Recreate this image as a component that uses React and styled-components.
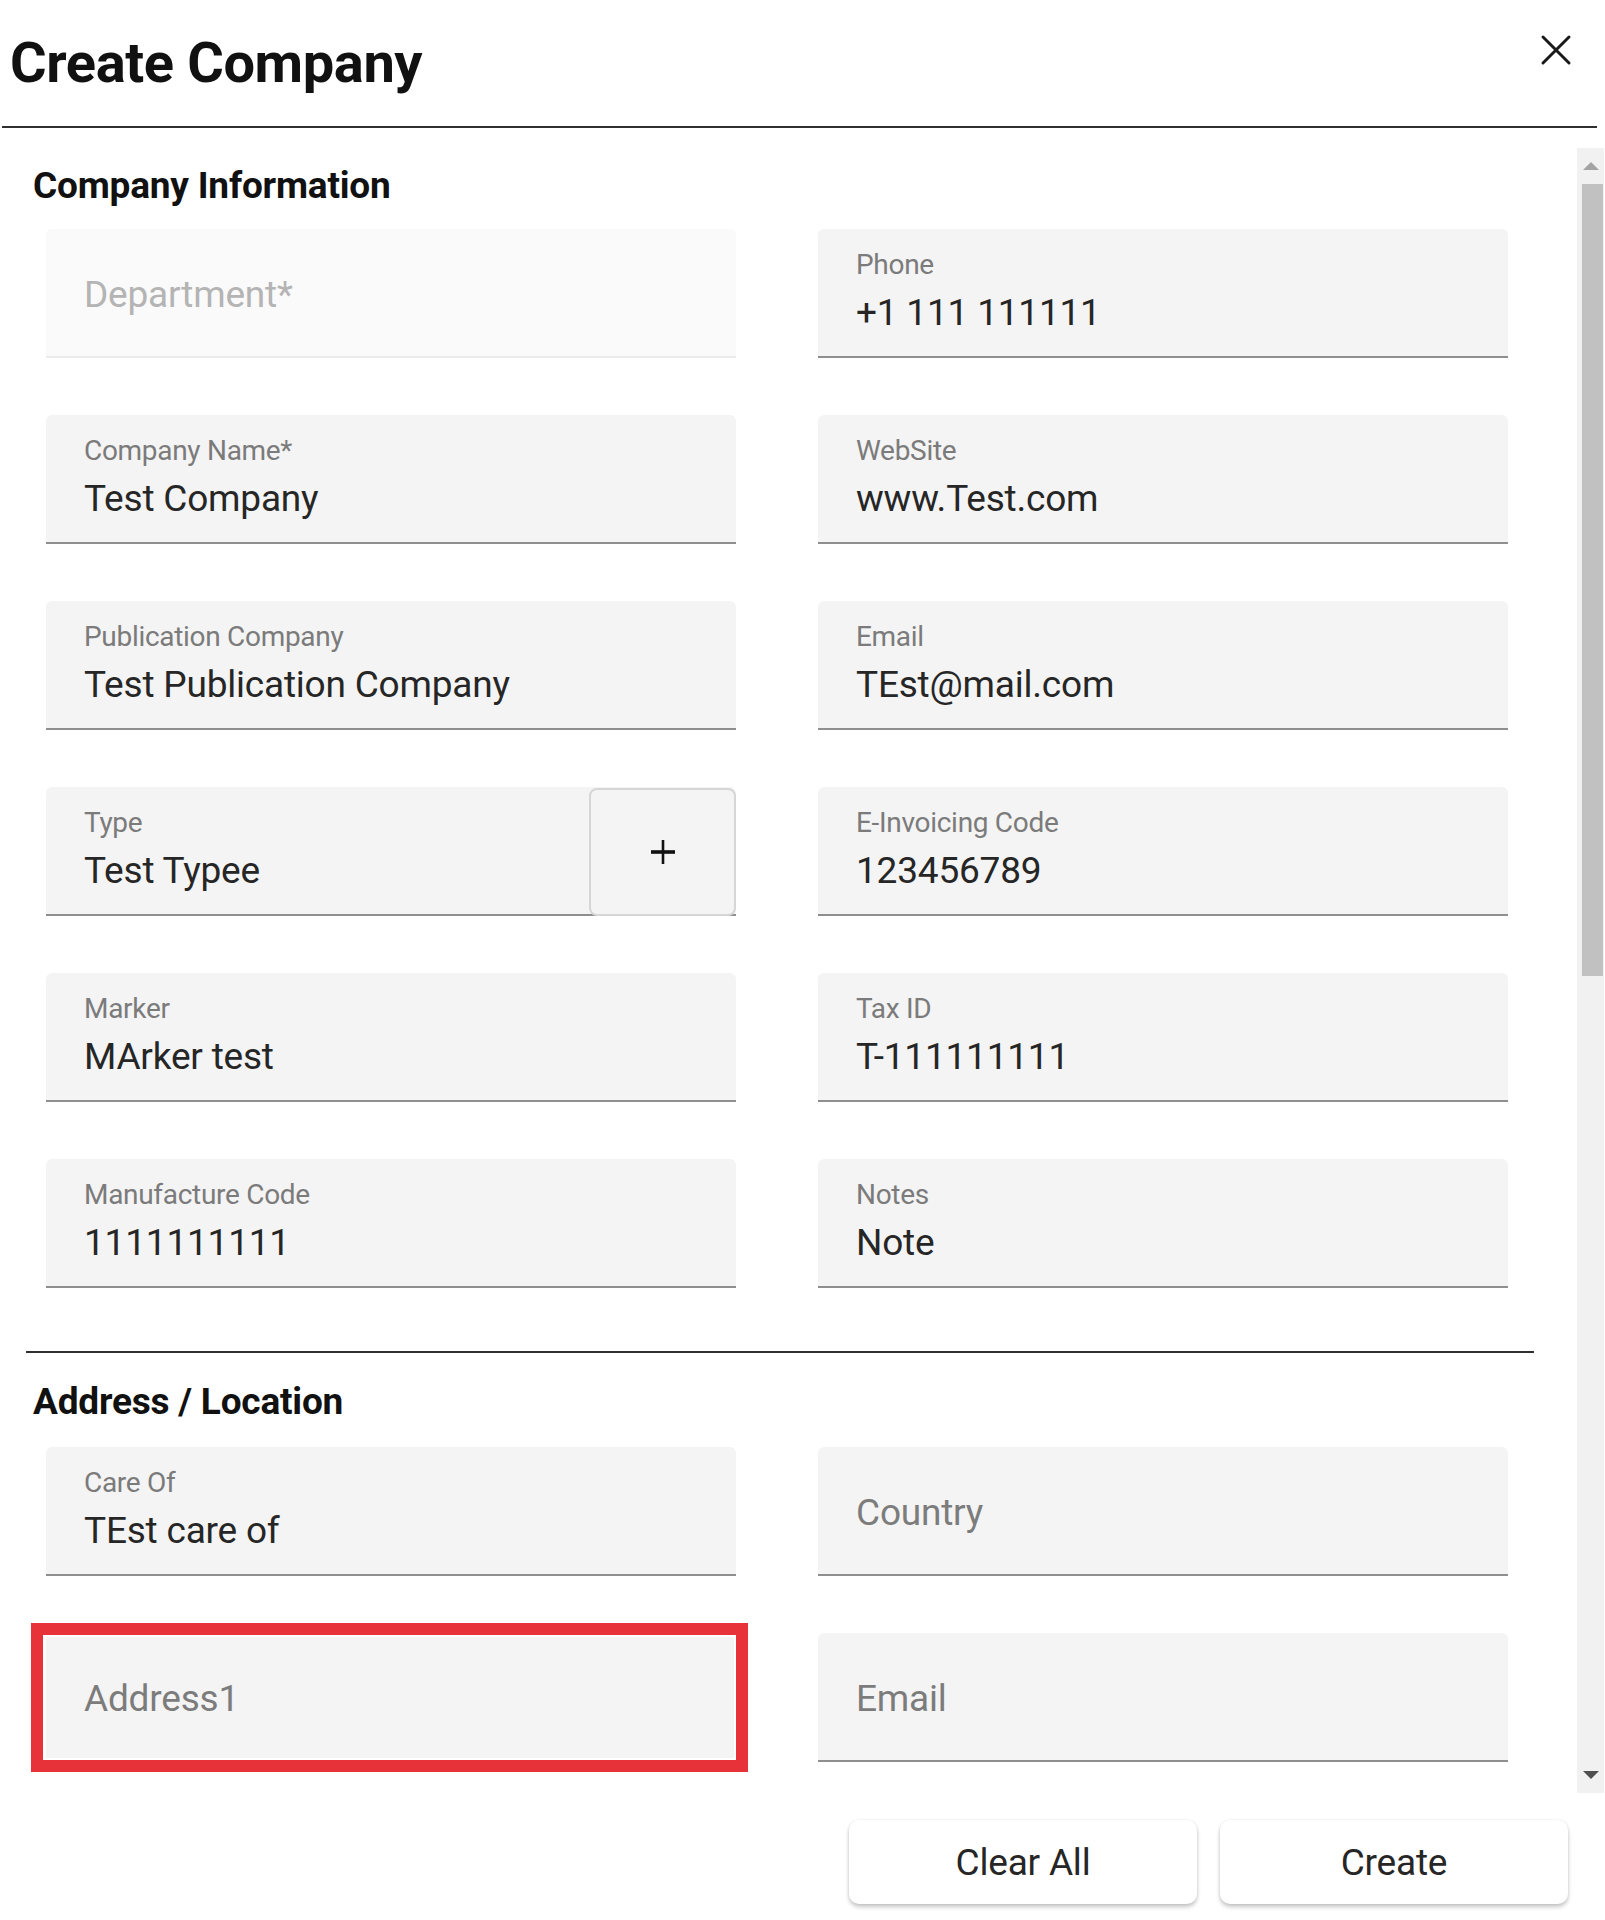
import React from 'react';
import styled, { createGlobalStyle } from 'styled-components';

const GlobalStyle = createGlobalStyle`
  html, body {
    margin: 0;
    padding: 0;
    background: #ffffff;
  }
  * {
    box-sizing: border-box;
  }
`;

const Page = styled.div`
  width: 1605px;
  height: 1920px;
  background: #ffffff;
  font-family: Roboto, 'Noto Sans', Arial, sans-serif;
  color: #1f1f1f;
  display: flex;
  flex-direction: column;
  overflow: hidden;
`;

const Header = styled.header`
  display: flex;
  align-items: flex-start;
  justify-content: space-between;
  height: 128px;
  margin: 0 8px 0 2px;
  border-bottom: 2px solid #2f2f2f;
`;

const Title = styled.h1`
  margin: 35px 0 0 8px;
  font-size: 56px;
  line-height: 1;
  font-weight: 700;
  letter-spacing: -0.4px;
  color: #111111;
`;

const CloseButton = styled.button`
  margin: 32px 23px 0 0;
  width: 36px;
  height: 36px;
  padding: 0;
  border: none;
  background: transparent;
  display: flex;
  align-items: center;
  justify-content: center;
  cursor: pointer;
`;

const Body = styled.div`
  display: flex;
  height: 1645px;
  margin-top: 20px;
`;

const Scroller = styled.div`
  flex: 1;
  overflow: hidden;
  padding: 19px 0 0 26px;
`;

const SectionTitle = styled.h2`
  margin: 0 0 0 7px;
  font-size: 37px;
  line-height: 1;
  font-weight: 700;
  letter-spacing: -0.2px;
  color: #111111;
`;

const FieldGrid = styled.div`
  display: grid;
  grid-template-columns: 690px 690px;
  column-gap: 82px;
  row-gap: 57px;
  margin: ${(p) => p.$top}px 0 0 20px;
`;

const Divider = styled.hr`
  width: 1508px;
  height: 2px;
  margin: 63px 0 30px 0;
  border: none;
  background: #2f2f2f;
`;

const Field = styled.div`
  position: relative;
  display: flex;
  height: 129px;
  border-radius: 6px 6px 0 0;
  background: ${(p) => (p.$disabled ? '#fafafa' : '#f4f4f4')};
  border-bottom: 2px solid ${(p) => (p.$disabled ? '#ebebeb' : '#8f8f8f')};

  ${(p) =>
    p.$highlight &&
    `
    &::after {
      content: '';
      position: absolute;
      top: -10px;
      left: -15px;
      right: -12px;
      bottom: -12px;
      border: 12px solid #e8323a;
      box-shadow: inset 0 0 0 2px #ffffff;
      pointer-events: none;
    }
  `}
`;

const FieldBody = styled.div`
  flex: 1;
  display: flex;
  flex-direction: column;
  justify-content: ${(p) => (p.$empty ? 'center' : 'flex-start')};
  padding: ${(p) => (p.$empty ? '4px 38px 0' : '22px 38px 0')};
`;

const Label = styled.span`
  font-size: 28px;
  line-height: 1;
  color: #7b7b7b;
  letter-spacing: -0.3px;
`;

const Placeholder = styled.span`
  font-size: 37px;
  line-height: 1;
  letter-spacing: -0.2px;
  color: ${(p) => (p.$disabled ? '#b4b4b4' : '#7c7c7c')};
`;

const Value = styled.span`
  margin-top: 15px;
  font-size: 37px;
  line-height: 1;
  letter-spacing: -0.2px;
  color: #262626;
`;

const AddButton = styled.button`
  width: 147px;
  margin: 1px 0 -2px 0;
  border: 2px solid #d6d6d6;
  border-radius: 8px;
  background: #f4f4f4;
  display: flex;
  align-items: center;
  justify-content: center;
  padding: 0;
  cursor: pointer;
`;

const ScrollBar = styled.div`
  width: 27px;
  margin: 0 1px 0 0;
  background: #f1f1f1;
  display: flex;
  flex-direction: column;
  align-items: center;
`;

const Arrow = styled.div`
  width: 0;
  height: 0;
  margin: ${(p) => (p.$up ? '14px 0 14px' : '10px 0 14px')};
  border-left: 8px solid transparent;
  border-right: 8px solid transparent;
  ${(p) =>
    p.$up
      ? 'border-bottom: 8px solid #a3a3a3;'
      : 'border-top: 8px solid #505050;'}
`;

const Thumb = styled.div`
  width: 21px;
  margin-left: 4px;
  height: 792px;
  background: #c1c1c1;
`;

const Track = styled.div`
  flex: 1;
`;

const Footer = styled.footer`
  display: flex;
  justify-content: flex-end;
  gap: 23px;
  padding: 27px 37px 0 0;
`;

const ActionButton = styled.button`
  width: 348px;
  height: 84px;
  border: none;
  border-radius: 10px;
  background: #ffffff;
  box-shadow: 0 3px 4px rgba(0, 0, 0, 0.22), 0 0 3px rgba(0, 0, 0, 0.08);
  font-family: Roboto, 'Noto Sans', Arial, sans-serif;
  font-size: 37px;
  letter-spacing: -0.2px;
  color: #262626;
  cursor: pointer;
`;

const companyFields = [
  { placeholder: 'Department*', disabled: true },
  { label: 'Phone', value: '+1 111 111111' },
  { label: 'Company Name*', value: 'Test Company' },
  { label: 'WebSite', value: 'www.Test.com' },
  { label: 'Publication Company', value: 'Test Publication Company' },
  { label: 'Email', value: 'TEst@mail.com' },
  { label: 'Type', value: 'Test Typee', addon: true },
  { label: 'E-Invoicing Code', value: '123456789' },
  { label: 'Marker', value: 'MArker test' },
  { label: 'Tax ID', value: 'T-111111111' },
  { label: 'Manufacture Code', value: '1111111111' },
  { label: 'Notes', value: 'Note' },
];

const addressFields = [
  { label: 'Care Of', value: 'TEst care of' },
  { placeholder: 'Country' },
  { placeholder: 'Address1', highlight: true },
  { placeholder: 'Email' },
];

function CloseIcon() {
  return (
    <svg width="32" height="32" viewBox="0 0 32 32" fill="none">
      <path d="M3 3 L29 29 M29 3 L3 29" stroke="#1a1a1a" strokeWidth="3" strokeLinecap="round" />
    </svg>
  );
}

function PlusIcon() {
  return (
    <svg width="26" height="26" viewBox="0 0 26 26" fill="none">
      <path d="M1 13 H25" stroke="#111111" strokeWidth="3.6" />
      <path d="M13 1 V25" stroke="#111111" strokeWidth="2.6" />
    </svg>
  );
}

function FormField({ label, value, placeholder, disabled, addon, highlight }) {
  const empty = !value;
  return (
    <Field $disabled={disabled} $highlight={highlight}>
      <FieldBody $empty={empty}>
        {empty ? (
          <Placeholder $disabled={disabled}>{placeholder}</Placeholder>
        ) : (
          <>
            <Label>{label}</Label>
            <Value>{value}</Value>
          </>
        )}
      </FieldBody>
      {addon && (
        <AddButton type="button" aria-label="Add type">
          <PlusIcon />
        </AddButton>
      )}
    </Field>
  );
}

export default function App() {
  return (
    <>
      <GlobalStyle />
      <Page>
        <Header>
          <Title>Create Company</Title>
          <CloseButton type="button" aria-label="Close">
            <CloseIcon />
          </CloseButton>
        </Header>
        <Body>
          <Scroller>
            <SectionTitle>Company Information</SectionTitle>
            <FieldGrid $top={25}>
              {companyFields.map((f, i) => (
                <FormField key={i} {...f} />
              ))}
            </FieldGrid>
            <Divider />
            <SectionTitle>Address / Location</SectionTitle>
            <FieldGrid $top={27}>
              {addressFields.map((f, i) => (
                <FormField key={i} {...f} />
              ))}
            </FieldGrid>
          </Scroller>
          <ScrollBar>
            <Arrow $up />
            <Thumb />
            <Track />
            <Arrow />
          </ScrollBar>
        </Body>
        <Footer>
          <ActionButton type="button">Clear All</ActionButton>
          <ActionButton type="button">Create</ActionButton>
        </Footer>
      </Page>
    </>
  );
}
